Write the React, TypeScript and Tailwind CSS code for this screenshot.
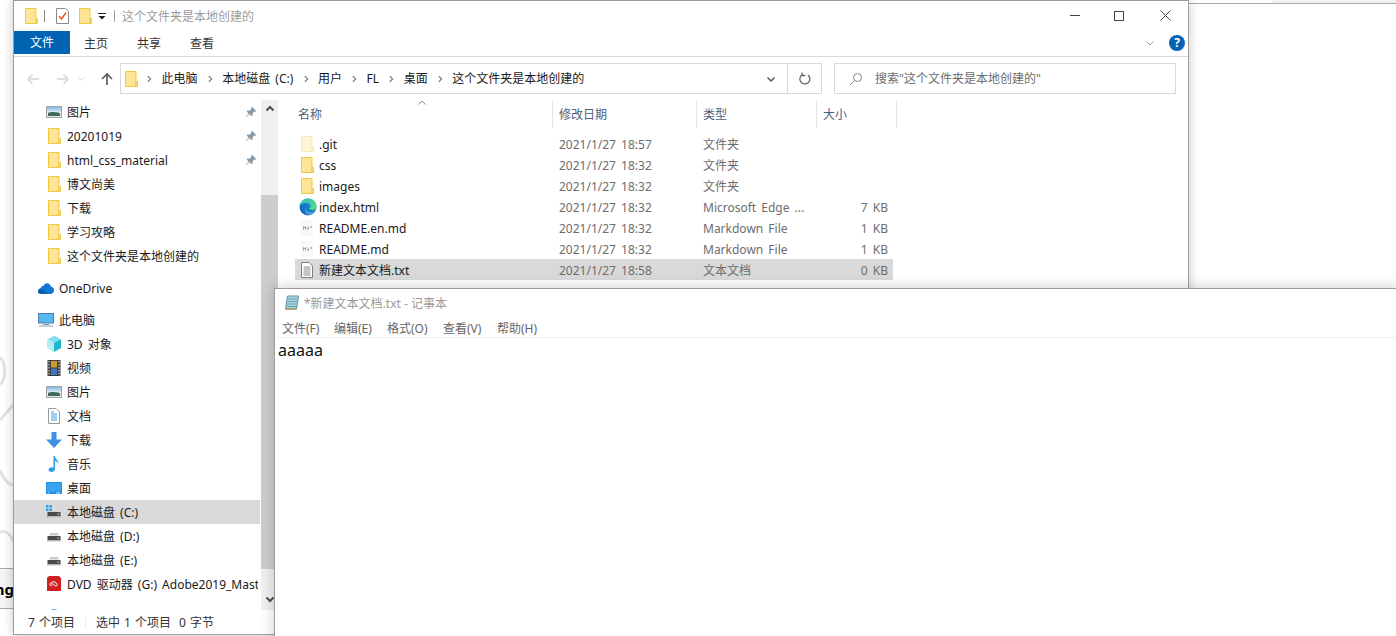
import React from "react";

const Folder = ({ faded = false }: { faded?: boolean }) => (
  <svg width="16" height="16" viewBox="0 0 16 16" className="shrink-0">
    <path d="M2.500.5h10.500v15H2.500z" fill={faded ? "#fff6d8" : "#fde595"} stroke={faded ? "#f8e9b5" : "#f0c944"} />
    <path d="M13 10.500h1.500v5H13z" fill={faded ? "#fff6d8" : "#fde595"} stroke={faded ? "#f8e9b5" : "#f0c944"} />
  </svg>
);

const Picture = () => (
  <svg width="16" height="14" viewBox="0 0 16 14" className="shrink-0">
    <defs>
      <linearGradient id="sky" x1="0" x2="0" y1="0" y2="1">
        <stop offset="0" stopColor="#7fb2dc" />
        <stop offset="0.55" stopColor="#e4eff5" />
        <stop offset="1" stopColor="#dfe9ee" />
      </linearGradient>
    </defs>
    <rect x=".5" y="1.500" width="15" height="11" fill="url(#sky)" stroke="#a2a2a2" />
    <path d="M2 8c3-1.500 8-1 12 0v3H2z" fill="#3f6a5c" />
  </svg>
);

const Pin = () => (
  <svg width="12" height="12" viewBox="0 0 12 12" className="shrink-0">
    <path d="M7 .8l4.200 4.200-1 .7-.8-.3-2 2 .2 2-1 .8-2-2.100L1.200 11 1 10.800 3.600 7.600 1.600 5.600l.8-1 2 .2 2-2-.3-.8z" fill="#8b98a5" />
  </svg>
);

const Cube = () => (
  <svg width="16" height="16" viewBox="0 0 16 16" className="shrink-0">
    <path d="M8 0l7 3.500v8.500L8 16z" fill="#1fb4d2" />
    <path d="M8 0L1 3.500 8 7l7-3.500z" fill="#7fe0ea" />
    <path d="M1 3.500V12l7 4V7z" fill="#b6ecef" />
  </svg>
);

const Film = () => (
  <svg width="16" height="16" viewBox="0 0 16 16" className="shrink-0">
    <rect x="1.500" y="0" width="13" height="16" fill="#3d3d3d" />
    <path d="M2.500 1h1v1.500h-1zM2.500 4h1v1.500h-1zM2.500 7h1v1.500h-1zM2.500 10h1v1.500h-1zM2.500 13h1v1.500h-1zM12.500 1h1v1.500h-1zM12.500 4h1v1.500h-1zM12.500 7h1v1.500h-1zM12.500 10h1v1.500h-1zM12.500 13h1v1.500h-1z" fill="#e8e8e8" />
    <rect x="5" y="1" width="6" height="6.500" fill="#c99a2e" />
    <rect x="5" y="8.500" width="6" height="6.500" fill="#3f78c0" />
  </svg>
);

const Doc = () => (
  <svg width="16" height="16" viewBox="0 0 16 16" className="shrink-0">
    <path d="M2.500.5H10L13.500 4v11.500h-11z" fill="#fff" stroke="#9a9a9a" />
    <path d="M5 4h3M5 6h6M5 8h6M5 10h6M5 12h6" stroke="#3aa0e6" strokeWidth="1" />
  </svg>
);

const DownArrow = () => (
  <svg width="16" height="16" viewBox="0 0 16 16" className="shrink-0">
    <path d="M5.500 0h5v7.500H16L8 16 0 7.500h5.500z" fill="#3f92e3" />
  </svg>
);

const Note = () => (
  <svg width="16" height="16" viewBox="0 0 16 16" className="shrink-0">
    <path d="M7.500 0h1.300c.3 3 4 4 3.700 8-.8-2-2.500-2.800-3.500-3V13c0 2-1.800 3-3.600 3C3.500 16 2.500 15 2.500 13.800c0-1.500 1.500-2.600 3.200-2.600.7 0 1.300.2 1.800.5z" fill="#2f9be8" />
  </svg>
);

const Desktop = () => (
  <svg width="16" height="13" viewBox="0 0 16 13" className="shrink-0">
    <rect x="0" y="0" width="16" height="12" fill="#1b8fea" />
    <path d="M1 1h14v8L1 11z" fill="#37a4f2" />
    <path d="M2 11h1M10 11h4" stroke="#d5efff" />
  </svg>
);

const Drive = ({ win = false }: { win?: boolean }) => (
  <svg width="16" height="16" viewBox="0 0 16 16" className="shrink-0">
    {win && <path d="M0 1h2.500v2.500H0zM3.500 1H6v2.500H3.500zM0 4.500h2.500V7H0zM3.500 4.500H6V7H3.500z" fill="#1aa3e8" />}
    {!win && <path d="M3 7.500L4.500 5h7L13 7.500z" fill="#c8c8c8" />}
    {win && <path d="M4 7.500h8l1 1H3z" fill="#c8c8c8" />}
    <rect x="1.500" y="8" width="13" height="5" fill="#4a4a4a" />
    <rect x="1.500" y="12" width="13" height="1.500" fill="#bdbdbd" />
    <rect x="11.500" y="9.500" width="1.500" height="1.500" fill="#7cd67c" />
  </svg>
);

const Dvd = () => (
  <svg width="16" height="16" viewBox="0 0 16 16" className="shrink-0">
    <path d="M1 2l2-2h10l2 2v13H1z" fill="#d01f1f" />
    <path d="M5.500 10c-2.200-.2-2.200-3.200.2-3.200.8-1.800 3.600-1.600 4 .3 2 0 2 2.900 0 2.900-1 0-2.400-2.500-3.300-2.500-1 0-1 1.500 0 1.500" fill="none" stroke="#fff" strokeWidth="1" />
  </svg>
);

const OneDrive = () => (
  <svg width="16" height="11" viewBox="0 0 16 11" className="shrink-0">
    <path d="M3.500 11C1 11 0 9.500 0 8.200 0 6.800 1 5.600 2.600 5.400 3 3.500 4.500 2.800 5.500 2.800 6.500 1 8 .3 9 .3c2 0 3.500 1.400 3.800 3.200C14.800 3.700 16 5.300 16 7.200 16 9.500 14.300 11 12.500 11z" fill="#0f78d4" />
    <path d="M3.500 11C1 11 0 9.500 0 8.200c0-1 .7-2.300 2.500-2.700L5.500 7l4 4z" fill="#0a5fb0" />
  </svg>
);

const Monitor = () => (
  <svg width="16" height="14" viewBox="0 0 16 14" className="shrink-0">
    <rect x="0.500" y=".5" width="15" height="9.500" fill="#55b8ee" stroke="#4c7ea8" />
    <path d="M5 11h6v1H5zM1 12.500h14v1H1z" fill="#8aa0b5" />
  </svg>
);

const Edge = () => (
  <svg width="18" height="18" viewBox="0 0 18 18" className="shrink-0">
    <defs>
      <linearGradient id="edgeA" x1="0" x2="1" y1="1" y2="0">
        <stop offset="0" stopColor="#0a5fb5" />
        <stop offset="1" stopColor="#1a9fe8" />
      </linearGradient>
      <linearGradient id="edgeB" x1="0" x2="1" y1="0" y2="1">
        <stop offset="0" stopColor="#2cc0c0" />
        <stop offset="1" stopColor="#62dc78" />
      </linearGradient>
    </defs>
    <circle cx="9" cy="9" r="8.500" fill="url(#edgeA)" />
    <path d="M1 7C2.500 2.500 6 .5 9 .5c4.500 0 8.500 3.500 8.500 8 0 2.500-2 3.500-4 3.500-2 0-3.500-1-3.500-2 1 0 2-.8 1.500-2.500C10.500 5 8 4.500 6 5 3.500 5.500 1.800 6.800 1 7z" fill="url(#edgeB)" />
    <path d="M6.500 9c0 3 2.500 5 5 5 2 0 3.500-.5 4.500-2-1 3-4 5-6.500 5C7 17 5 12 6.500 9z" fill="#fff" opacity=".25" />
  </svg>
);

const Md = () => (
  <svg width="16" height="16" viewBox="0 0 16 16" className="shrink-0">
    <path d="M2 0h12v16H2z" fill="#f8f8f8" />
    <path d="M4.500 9.500v-3l1 1.500 1-1.500v3M9 6.500v3M8 8.500l1 1 1-1M11.500 7h1.500M12.200 6.300v1.500" fill="none" stroke="#8a8a8a" strokeWidth=".8" />
  </svg>
);

const TextDoc = () => (
  <svg width="16" height="16" viewBox="0 0 16 16" className="shrink-0">
    <path d="M2.500.5H10L13.500 4v11.500h-11z" fill="#fff" stroke="#7d7d7d" />
    <path d="M4.500 5h7M4.500 7h7M4.500 9h7M4.500 11h7M4.500 13h7" stroke="#8a8a8a" />
  </svg>
);

const Chevron = ({ dir, color, size = 10, w = 1.500 }: { dir: "l" | "r" | "u" | "d"; color: string; size?: number; w?: number }) => {
  const d = { l: "M6.500 1.500L3 5l3.500 3.500", r: "M3.500 1.500L7 5 3.500 8.500", u: "M1.500 6.500L5 3l3.500 3.500", d: "M1.500 3.500L5 7l3.500-3.500" }[dir];
  return (
    <svg width={size} height={size} viewBox="0 0 10 10" className="shrink-0">
      <path d={d} fill="none" stroke={color} strokeWidth={w} />
    </svg>
  );
};

const HArrow = ({ right = false, color }: { right?: boolean; color: string }) => (
  <svg width="14" height="14" viewBox="0 0 14 14" className="shrink-0">
    <path d={right ? "M1 7h11M7.500 2.500L12 7l-4.500 4.500" : "M13 7H2M6.500 2.500L2 7l4.500 4.500"} fill="none" stroke={color} strokeWidth="1.500" />
  </svg>
);

type NavItem = { icon: React.ReactNode; label: string; pin?: boolean; selected?: boolean };

const quick: NavItem[] = [
  { icon: <Picture />, label: "图片", pin: true },
  { icon: <Folder />, label: "20201019", pin: true },
  { icon: <Folder />, label: "html_css_material", pin: true },
  { icon: <Folder />, label: "博文尚美" },
  { icon: <Folder />, label: "下载" },
  { icon: <Folder />, label: "学习攻略" },
  { icon: <Folder />, label: "这个文件夹是本地创建的" },
];

const pc: NavItem[] = [
  { icon: <Cube />, label: "3D 对象" },
  { icon: <Film />, label: "视频" },
  { icon: <Picture />, label: "图片" },
  { icon: <Doc />, label: "文档" },
  { icon: <DownArrow />, label: "下载" },
  { icon: <Note />, label: "音乐" },
  { icon: <Desktop />, label: "桌面" },
  { icon: <Drive win />, label: "本地磁盘 (C:)", selected: true },
  { icon: <Drive />, label: "本地磁盘 (D:)" },
  { icon: <Drive />, label: "本地磁盘 (E:)" },
  { icon: <Dvd />, label: "DVD 驱动器 (G:) Adobe2019_Master_Collection" },
];

const NavRow = ({ item }: { item: NavItem }) => (
  <div className={`flex h-6 w-[246px] shrink-0 items-center pl-8 pr-[2px] ${item.selected ? "bg-[#d9d9d9]" : ""}`}>
    <span className="flex w-[21px] shrink-0 items-center">{item.icon}</span>
    <span className="min-w-0 flex-1 overflow-hidden whitespace-nowrap pt-[2px] text-[#1a1a1a]">{item.label}</span>
    {item.pin && <span className="ml-1 mr-[1px]"><Pin /></span>}
  </div>
);

const files = [
  { icon: <Folder faded />, name: ".git", date: "2021/1/27 18:57", type: "文件夹", size: "" },
  { icon: <Folder />, name: "css", date: "2021/1/27 18:32", type: "文件夹", size: "" },
  { icon: <Folder />, name: "images", date: "2021/1/27 18:32", type: "文件夹", size: "" },
  { icon: <Edge />, name: "index.html", date: "2021/1/27 18:32", type: "Microsoft Edge ...", size: "7 KB" },
  { icon: <Md />, name: "README.en.md", date: "2021/1/27 18:32", type: "Markdown File", size: "1 KB" },
  { icon: <Md />, name: "README.md", date: "2021/1/27 18:32", type: "Markdown File", size: "1 KB" },
  { icon: <TextDoc />, name: "新建文本文档.txt", date: "2021/1/27 18:58", type: "文本文档", size: "0 KB", selected: true },
];

const crumbs = ["此电脑", "本地磁盘 (C:)", "用户", "FL", "桌面", "这个文件夹是本地创建的"];

export default function App() {
  return (
    <div className="relative h-[636px] w-[1396px] overflow-hidden bg-white font-['Noto_Sans','Noto_Sans_CJK_SC',sans-serif] text-[12px] leading-[16px] [word-spacing:2px]">
      {/* desktop behind the windows */}
      <svg width="14" height="636" className="absolute left-0 top-0" viewBox="0 0 14 636">
        <path d="M0 358c6 2 6 24 0 26M14 404L0 420M0 470c3 8 8 15 14 15M0 532c6-2 11 3 14 10" fill="none" stroke="#e2e2e2" strokeWidth="3" />
      </svg>
      <div className="absolute left-0 top-[568px] flex h-[41px] w-[14px] items-center justify-end overflow-hidden border-y border-[#a8a8a8] bg-[#f4f4f4] text-[15px] font-bold text-black">
        <span className="whitespace-nowrap">ng</span>
      </div>
      <div className="absolute left-[1188px] top-0 h-[4px] w-[208px] border-b border-[#a9a9a9] bg-white" />
      <div className="absolute left-[1272px] top-0 h-[3px] w-[124px] bg-[#f0f0f0]" />

      {/* Explorer window */}
      <div className="absolute left-[13px] top-0 flex h-[635px] w-[1176px] flex-col border border-[#9c9c9c] bg-white shadow-[0_0_10px_rgba(0,0,0,0.22)]">
        {/* title bar */}
        <div className="flex h-[29px] shrink-0 items-center pl-[9px]">
          <Folder />
          <span className="ml-[5px] h-[12px] w-px bg-[#8a8a8a]" />
          <span className="ml-[11px]">
            <svg width="13" height="16" viewBox="0 0 13 16" className="block">
              <path d="M.5.500h9l3 3v12H.5z" fill="#fff" stroke="#8a8a8a" />
              <path d="M3 8l2.500 3L10 4.500" fill="none" stroke="#e8592b" strokeWidth="1.500" />
            </svg>
          </span>
          <span className="ml-[8px]"><Folder /></span>
          <span className="ml-[5px]">
            <svg width="8" height="8" viewBox="0 0 8 8" className="block">
              <path d="M0 1h8v1H0zM.5 4h7L4 7.500z" fill="#222" />
            </svg>
          </span>
          <span className="ml-[8px] h-[12px] w-px bg-[#a0a0a0]" />
          <span className="ml-[7px] pt-[2px] text-[#9c9c9c]">这个文件夹是本地创建的</span>
          <div className="ml-auto flex items-center">
            <span className="mr-[34px] h-px w-[10px] bg-[#444]" />
            <span className="mr-[36px] h-[10px] w-[10px] border border-[#444]" />
            <svg width="11" height="11" viewBox="0 0 11 11" className="mr-[17px]">
              <path d="M.5.500l10 10M10.500.500l-10 10" stroke="#444" />
            </svg>
          </div>
        </div>

        {/* ribbon tabs */}
        <div className="flex h-[27px] shrink-0 items-start border-b border-[#dadada]">
          <span className="mt-[1px] flex h-[23px] w-[56px] items-center justify-center bg-[#0063b1] pt-[1px] text-white">文件</span>
          <div className="flex h-[25px] items-center pl-[14px] pt-[2px] text-[#333]">
            <span className="w-[53px]">主页</span>
            <span className="w-[53px]">共享</span>
            <span>查看</span>
          </div>
          <div className="ml-auto flex h-[26px] items-center pr-[3px]">
            <span className="mr-[14px]"><Chevron dir="d" color="#9a9a9a" w={1} /></span>
            <span className="flex h-4 w-4 items-center justify-center rounded-full bg-[#0a62b5] text-[12px] font-bold text-white">?</span>
          </div>
        </div>

        {/* address row */}
        <div className="flex h-[37px] shrink-0 items-end">
          <div className="flex h-[31px] w-[106px] shrink-0 items-center pl-[12px]">
            <HArrow color="#d5d5d5" />
            <span className="ml-[16px]"><HArrow right color="#d5d5d5" /></span>
            <span className="ml-[7px]"><Chevron dir="d" color="#d5d5d5" size={9} w={1} /></span>
            <svg width="14" height="14" viewBox="0 0 14 14" className="ml-[14px] shrink-0">
              <path d="M7 13V2M2 7l5-5 5 5" fill="none" stroke="#5e5e5e" strokeWidth="1.700" />
            </svg>
          </div>
          <div className="flex h-[31px] w-[702px] shrink-0 items-center border border-[#d9d9d9] pl-[2px]">
            <span className="mr-[-2px]"><Folder /></span>
            <div className="flex items-center text-[#1a1a1a]">
              {crumbs.map((c) => (
                <React.Fragment key={c}>
                  <span className="mx-[8.300px]"><Chevron dir="r" color="#777" size={8} /></span>
                  <span className="whitespace-nowrap pt-[1px]">{c}</span>
                </React.Fragment>
              ))}
            </div>
            <span className="ml-auto mr-[11px]"><Chevron dir="d" color="#555" /></span>
            <span className="flex h-full w-[34px] items-center justify-center border-l border-[#d9d9d9]">
              <svg width="12" height="14" viewBox="0 0 12 14">
                <path d="M3.500 2.500A5 5 0 1 0 9 3M3 .5v3h3.200" fill="none" stroke="#666" strokeWidth="1.300" />
              </svg>
            </span>
          </div>
          <div className="ml-[12px] flex h-[31px] w-[342px] shrink-0 items-center border border-[#d9d9d9] pl-[14px] text-[#6d6d6d]">
            <svg width="14" height="14" viewBox="0 0 14 14" className="shrink-0">
              <circle cx="8.500" cy="5.500" r="4" fill="none" stroke="#888" />
              <path d="M5.500 8.500L1 13" stroke="#888" />
            </svg>
            <span className="ml-[12px] whitespace-nowrap">搜索"这个文件夹是本地创建的"</span>
          </div>
        </div>

        {/* body */}
        <div className="flex min-h-0 flex-1">
          {/* navigation pane */}
          <div className="flex w-[264px] shrink-0 pt-[6px]">
            <div className="flex w-[247px] shrink-0 flex-col overflow-hidden">
              <div className="flex flex-col pl-0">
                {quick.map((i) => <NavRow key={i.label} item={i} />)}
              </div>
              <div className="mt-2 flex h-6 shrink-0 items-center pl-6">
                <span className="flex w-[21px] items-center"><OneDrive /></span>
                <span className="pt-[2px] text-[#1a1a1a]">OneDrive</span>
              </div>
              <div className="mt-2 flex h-6 shrink-0 items-center pl-6">
                <span className="flex w-[21px] items-center"><Monitor /></span>
                <span className="pt-[2px] text-[#1a1a1a]">此电脑</span>
              </div>
              {pc.map((i) => <NavRow key={i.label} item={i} />)}
              <div className="mt-3 flex h-4 shrink-0 pl-8">
                <svg width="16" height="16" viewBox="0 0 16 16" className="shrink-0">
                  <circle cx="8" cy="7" r="6" fill="#5aa7d8" />
                </svg>
              </div>
            </div>
            <div className="flex w-[17px] shrink-0 flex-col bg-[#f0f0f0]">
              <div className="flex h-[17px] shrink-0 items-center justify-center bg-[#f0f0f0]">
                <Chevron dir="u" color="#505050" w={2} />
              </div>
              <div className="mt-[78px] h-[374px] shrink-0 bg-[#cdcdcd]" />
              <div className="mt-auto flex h-[17px] shrink-0 items-center justify-center pb-[6px]">
                <Chevron dir="d" color="#505050" w={2} />
              </div>
            </div>
          </div>

          {/* file list */}
          <div className="flex min-w-0 flex-1 flex-col pt-[6px]">
            <div className="relative flex h-[28px] shrink-0 items-stretch">
              <span className="flex w-[275px] items-center border-r border-[#e5e5e5] pl-[20px] pt-[2px] text-[#4c607a]">名称</span>
              <span className="flex w-[144px] items-center border-r border-[#e5e5e5] pl-[6px] pt-[2px] text-[#4c607a]">修改日期</span>
              <span className="flex w-[120px] items-center border-r border-[#e5e5e5] pl-[6px] pt-[2px] text-[#4c607a]">类型</span>
              <span className="flex w-[80px] items-center border-r border-[#e5e5e5] pl-[6px] pt-[2px] text-[#4c607a]">大小</span>
              <span className="absolute left-[139px] top-[-2px]"><Chevron dir="u" color="#888" w={1} /></span>
            </div>
            <div className="ml-[17px] mt-[5px] flex flex-col">
              {files.map((f) => (
                <div key={f.name} className={`flex h-[21px] w-[598px] items-center ${f.selected ? "bg-[#d9d9d9]" : ""}`}>
                  <span className="flex w-[24px] shrink-0 items-center pl-[4px]">{f.icon}</span>
                  <span className="w-[240px] shrink-0 whitespace-nowrap pt-[2px] text-[#1a1a1a]">{f.name}</span>
                  <span className="w-[144px] shrink-0 whitespace-nowrap pt-[2px] text-[#6d6d6d]">{f.date}</span>
                  <span className="w-[120px] shrink-0 whitespace-nowrap pt-[2px] text-[#6d6d6d]">{f.type}</span>
                  <span className="w-[65px] shrink-0 whitespace-nowrap pt-[2px] text-right text-[#6d6d6d]">{f.size}</span>
                </div>
              ))}
            </div>
          </div>
        </div>

        {/* status bar */}
        <div className="flex h-[24px] shrink-0 items-center pl-[14px] text-[#333] [word-spacing:1px]">
          <span className="pt-[2px]">7 个项目</span>
          <span className="ml-[10px] mr-[10px] h-[12px] w-px bg-[#ececec]" />
          <span className="pt-[2px]">选中 1 个项目</span>
          <span className="ml-[8px] pt-[2px]">0 字节</span>
        </div>
      </div>

      {/* Notepad window */}
      <div className="absolute left-[274px] top-[288px] flex h-[360px] w-[1130px] flex-col border border-[#9c9c9c] bg-white shadow-[0_0_14px_rgba(0,0,0,0.2)]">
        <div className="flex h-[28px] shrink-0 items-center pl-[9px] text-[#9a9a9a] [word-spacing:0px]">
          <svg width="16" height="18" viewBox="0 0 16 18" className="shrink-0">
            <path d="M3.500 2h11l-2 13h-11z" fill="#a8d4e0" stroke="#5f8fa3" />
            <path d="M4 5h9M3.700 7.500h9M3.300 10h9M3 12.500h9" stroke="#6f9fb5" />
            <path d="M1.500 15h11" stroke="#b89a66" strokeWidth="1.500" />
          </svg>
          <span className="ml-[4px] whitespace-nowrap pt-[2px]">*新建文本文档.txt - 记事本</span>
        </div>
        <div className="flex h-[21px] shrink-0 items-center border-b border-[#f0f0f0] pl-[7px] pt-[3px] text-[#666]">
          <span className="w-[52px]">文件(F)</span>
          <span className="w-[53px]">编辑(E)</span>
          <span className="w-[56px]">格式(O)</span>
          <span className="w-[54px]">查看(V)</span>
          <span>帮助(H)</span>
        </div>
        <div className="pl-[3px] pt-[2px] text-[16px] leading-[20px] text-[#111]">aaaaa</div>
      </div>
    </div>
  );
}
